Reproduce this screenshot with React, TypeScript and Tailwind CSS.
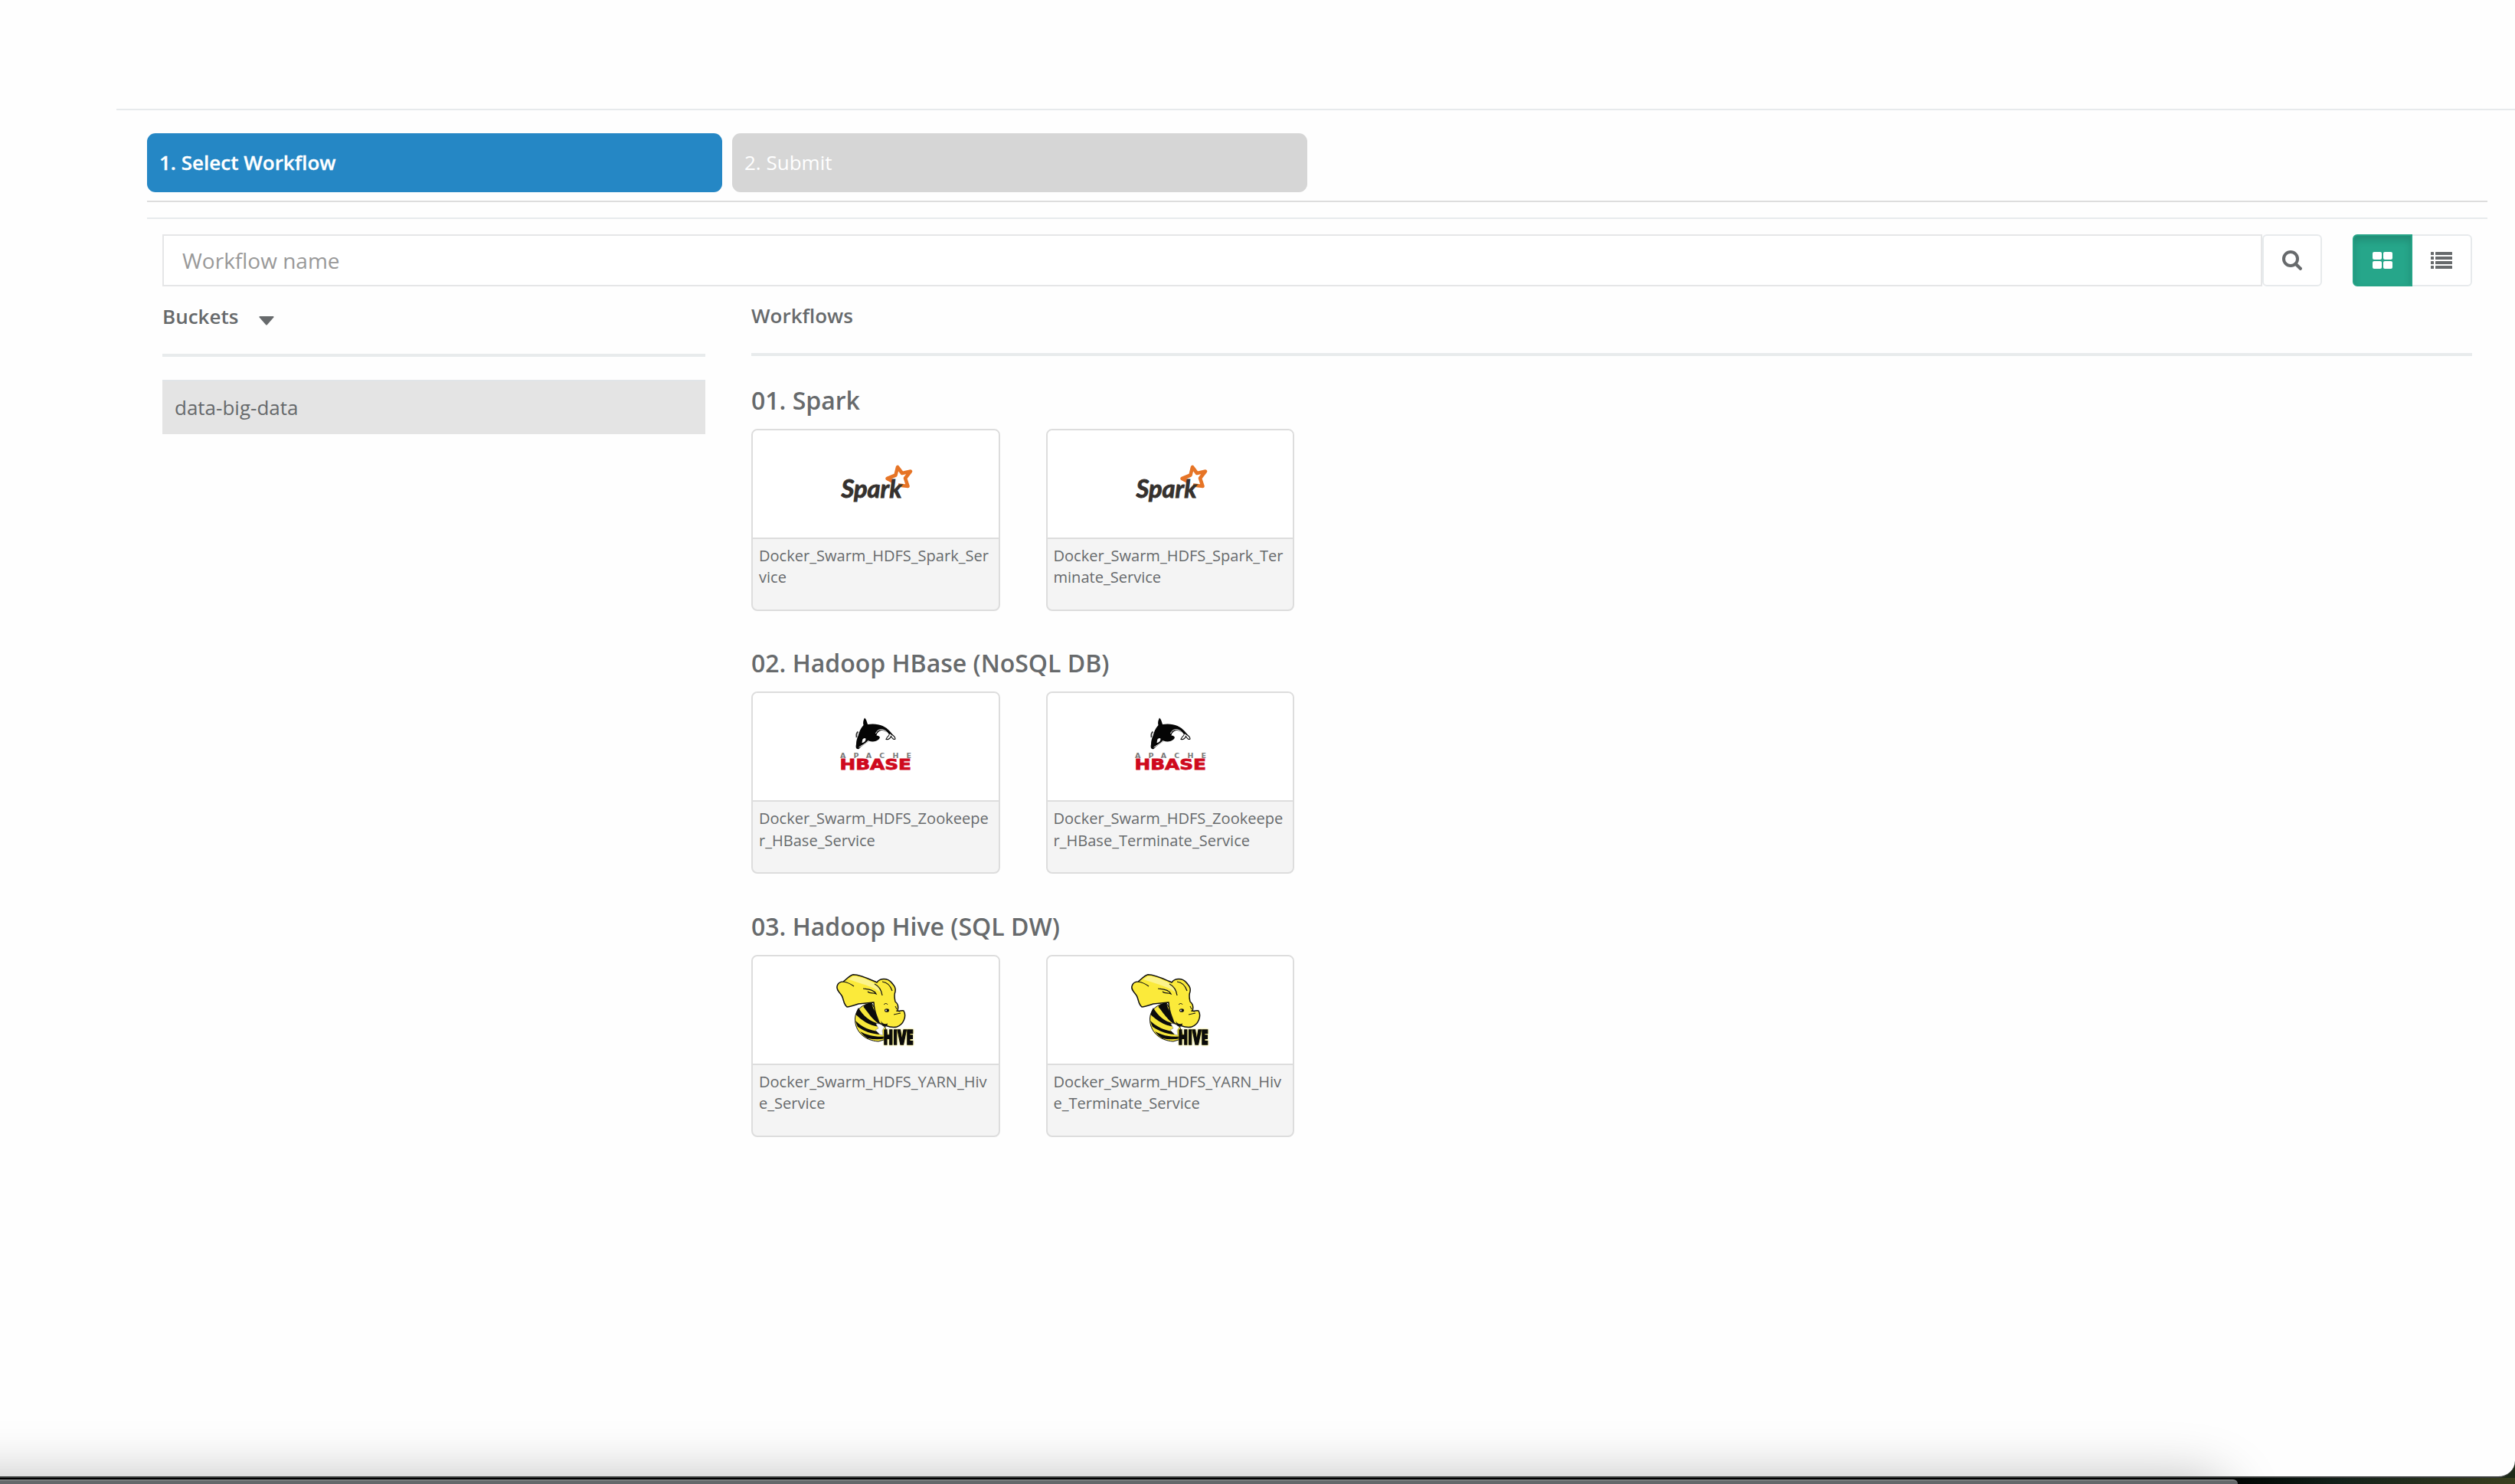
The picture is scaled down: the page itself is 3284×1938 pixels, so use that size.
import React from "react";

function SparkLogo() {
  return (
    <svg width="92" height="52" viewBox="0 0 92 52" className="block overflow-visible">
      <path
        d="M75 27.500 L87.500 29 L84 18.500 L91 9.500 L80 12 L74 4 L71.500 14.500 L60.500 19 L69 23.500"
        fill="none"
        stroke="#e67426"
        strokeWidth="4.600"
        strokeLinejoin="round"
      />
      <text
        x="0.500"
        y="44"
        textLength="79"
        lengthAdjust="spacingAndGlyphs"
        fill="#35312e"
        stroke="#35312e"
        strokeWidth="0.900"
        className="font-['Lato',sans-serif] text-[32px] font-bold italic"
      >
        Spark
      </text>
    </svg>
  );
}

function HBaseLogo() {
  return (
    <svg width="94" height="70" viewBox="0 0 94 70" className="block overflow-visible">
      <path
        d="M33 0.500 C35.500 2.500 36 6 37 9 C50 7 60 11 66 18 C69 21.500 71.500 24 73 28 C69 26 67 23 64 21 C57 14 50 17 48.500 23.500 C53 24 54 26 51.500 28.500 C48 32 42 32 38.500 30.500 C35 34 29 36.500 25.500 41 C22 42 21 39 22 35 C22 31 23 27 24.500 24 C26 18 28 14 31.500 10 C30.500 7 31.500 3 33 0.500Z"
        fill="#050505"
      />
      <path d="M47.500 21 C50 13.500 59 14.500 63.500 20.500" fill="none" stroke="#fff" strokeWidth="1" />
      <path d="M30 30 C30 27.500 34 26 34.500 28 C34.500 31 31.500 33 29.500 33Z" fill="#fff" />
      <path d="M25.500 39 C30 36 34 34.500 38 30" fill="none" stroke="#fff" strokeWidth="0.900" />
      <path d="M65 22 C65.500 24 62 25 61 28.500 C65 29 67 26 67.500 24.500 C69 27 71 29.500 73 28 C73 25 70 23 67 21.500" fill="#fff" stroke="#111" strokeWidth="1.100" />
      <path d="M24.500 18.500 C22.500 20 22 23 22.500 26" stroke="#333" strokeWidth="1.800" fill="none" />
      <text x="1" y="52.700" textLength="93" fill="#7b7b7b" className="font-['DejaVu_Sans',sans-serif] text-[9.500px] font-bold">
        APACHE
      </text>
      <text
        x="0.500"
        y="68"
        textLength="93.500"
        lengthAdjust="spacingAndGlyphs"
        fill="#cf0a1d"
        stroke="#cf0a1d"
        strokeWidth="0.800"
        className="font-['DejaVu_Sans',sans-serif] text-[19.500px] font-bold"
      >
        HBASE
      </text>
    </svg>
  );
}

function HiveLogo() {
  return (
    <svg width="104" height="94" viewBox="0 0 104 94" className="block overflow-visible">
      <path d="M47 38 C36 39 26 46 25.500 58 C25 75 38 87 56 88 L70 84 L62 62Z" fill="#f7e73a" stroke="#111" strokeWidth="1" />
      <g fill="#0b0b0b">
        <path d="M47 37 C40 39 37 41 36.500 43 C42 49 47 59 58 66 L54 52 C50 48 48 42 47 37Z" />
        <path d="M30 44 C28 47 27 50 26.500 53 C34 60 43 67 57 69 L57 65 C45 62 36 55 30 44Z" />
        <path d="M26 61 C27 64 28 67 29 69 C38 75 46 78 58 79 L57 75 C45 74 34 69 26 61Z" />
        <path d="M32 75 C35 79 38 82 42 84 C52 86 62 86 74 82 L70 81 C55 83 43 81 32 75Z" />
      </g>
      <path d="M53 65 C58 64 62 68 64 69 L61 74 L62 80 L58 79 L52 73 L56 71Z" fill="#fff" stroke="#999" strokeWidth="0.700" />
      <path
        d="M54 11 C58 5 68 5 73 11 C76 15 79 17 78 23 C76 28 77 31 78 36 C83 40 82 45 81 48 C84 49 86 47 89 48 C93 55 89 66 80 69 C73 71 68 68 62 66 C58 65 56 64 56 61 C53 53 50 47 50 37 L30 39 C24 41 18 43 15 43 C10 39 11 33 8 28 C4 23 1 20 2 16 C3 12 6 10 10 10 C14 7 18 2 23 0.800 C33 1 45 7 54 11Z"
        fill="#fbea3a"
        stroke="#111"
        strokeWidth="1.500"
        strokeLinejoin="round"
      />
      <path d="M23 3 C34 3 45 9 52 13 C56 16 58 20 59 24 C50 17 38 14 26 10 L17 7Z" fill="#fbf38b" />
      <path
        d="M10 10 C16 11 20 13 24 16 M36 19 C42 20 50 20 53 26 C49 24 45 26 42 23 M51 13 C57 16 60 21 61 28 M61 10 C69 11 72 16 74 22"
        fill="none"
        stroke="#111"
        strokeWidth="1.200"
      />
      <path d="M63 40 C65 38 67 38 68 40 M84 49 L79 48 M85 51 L76 53 M80 46 L78 42" fill="none" stroke="#111" strokeWidth="1" />
      <ellipse cx="67" cy="47.500" rx="3" ry="2.300" fill="#111" />
      <circle cx="66" cy="47.500" r="0.900" fill="#fff" />
      <path d="M59 61 C61 65 65 66 68 64.500 C68 69 64 70 61 67Z" fill="#111" />
      <text
        x="62.500"
        y="91.500"
        textLength="39"
        lengthAdjust="spacingAndGlyphs"
        fill="#0a0a0a"
        stroke="#0a0a0a"
        strokeWidth="1.600"
        className="font-['Open_Sans',sans-serif] text-[26.500px] font-extrabold [filter:drop-shadow(0_0_0.8px_#d8ca20)]"
      >
        HIVE
      </text>
    </svg>
  );
}

function SearchIcon() {
  return (
    <svg width="26" height="26" viewBox="0 0 26 26" className="block">
      <circle cx="11" cy="11" r="9" fill="none" stroke="#676a6c" strokeWidth="4" />
      <path d="M18 18 L23.800 23.800" stroke="#676a6c" strokeWidth="4.200" strokeLinecap="round" />
    </svg>
  );
}

function GridIcon() {
  return (
    <svg width="26" height="22" viewBox="0 0 26 22" fill="#fff" className="block">
      <rect width="12" height="10" rx="2" />
      <rect x="14" width="12" height="10" rx="2" />
      <rect y="12" width="12" height="10" rx="2" />
      <rect x="14" y="12" width="12" height="10" rx="2" />
    </svg>
  );
}

function ListIcon() {
  return (
    <svg width="28" height="22" viewBox="0 0 28 22" fill="#676a6c" className="block">
      {[0, 6, 12, 18].map((y) => (
        <g key={y}>
          <rect y={y} width="4" height="4" rx="0.500" />
          <rect x="6" y={y} width="22" height="4" rx="0.500" />
        </g>
      ))}
    </svg>
  );
}

const groups = [
  {
    title: "01. Spark",
    Logo: SparkLogo,
    logoBox: "pl-[2px]",
    items: [
      ["Docker_Swarm_HDFS_Spark_Ser", "vice"],
      ["Docker_Swarm_HDFS_Spark_Ter", "minate_Service"],
    ],
  },
  {
    title: "02. Hadoop HBase (NoSQL DB)",
    Logo: HBaseLogo,
    logoBox: "pb-[7px]",
    items: [
      ["Docker_Swarm_HDFS_Zookeepe", "r_HBase_Service"],
      ["Docker_Swarm_HDFS_Zookeepe", "r_HBase_Terminate_Service"],
    ],
  },
  {
    title: "03. Hadoop Hive (SQL DW)",
    Logo: HiveLogo,
    logoBox: "pt-px",
    items: [
      ["Docker_Swarm_HDFS_YARN_Hiv", "e_Service"],
      ["Docker_Swarm_HDFS_YARN_Hiv", "e_Terminate_Service"],
    ],
  },
];

function Card({ lines, logoBox, children }: { lines: string[]; logoBox: string; children: React.ReactNode }) {
  return (
    <div className="flex h-[238px] w-[324.500px] flex-col overflow-hidden rounded-[8px] border-2 border-[#dddddd] bg-[#f4f4f4]">
      <div className={`flex h-[142px] items-center justify-center border-b-2 border-[#dddddd] bg-white ${logoBox}`}>
        {children}
      </div>
      <div className="pt-[8px] pl-[8px] text-[20.060px] leading-[28.300px] whitespace-nowrap">
        {lines.map((l) => (
          <div key={l}>{l}</div>
        ))}
      </div>
    </div>
  );
}

export default function App() {
  return (
    <div className="flex h-[1938px] w-[3284px] flex-col overflow-hidden bg-[#1d2a18] font-['Open_Sans',sans-serif] text-[26px] text-[#676a6c]">
      <div className="relative h-[1930px] shrink-0 overflow-hidden rounded-br-[22px] border-b-2 border-[#3a3d3c] bg-[#fefefe] pt-[142px] pl-[152px]">
        <main className="border-t-2 border-[#e7eaec] pt-[30px] pr-[36px] pl-[40px]">
          <nav className="flex gap-[13px]">
            <div className="flex h-[77px] w-[751px] items-center rounded-[11px] bg-[#2587c5] pl-4 font-semibold text-white [-webkit-text-stroke:0.3px_#ffffff]">
              1. Select Workflow
            </div>
            <div className="flex h-[77px] w-[751px] items-center rounded-[11px] bg-[#d6d6d6] pl-4 text-white">
              2. Submit
            </div>
          </nav>
          <div className="mt-[11px] h-[2px] bg-[#dddddd]" />
          <div className="mt-[20px] border-t-2 border-[#e7eaec] px-[20px] pt-[20px]">
            <div className="flex h-[68px]">
              <div className="flex flex-1 items-center border-2 border-[#e5e6e7] bg-white pl-[24px] text-[28px] text-[#999999]">
                Workflow name
              </div>
              <button className="flex w-[78px] items-center justify-center rounded-[6px] border-2 border-[#e7eaec] bg-white">
                <SearchIcon />
              </button>
              <button className="ml-[40px] flex w-[78px] items-center justify-center rounded-l-[6px] border-2 border-[#26a487] bg-[#26a68a] shadow-[inset_0_6px_10px_rgba(0,0,0,0.15)]">
                <GridIcon />
              </button>
              <button className="flex w-[78px] items-center justify-center rounded-r-[6px] border-2 border-l-0 border-[#e7eaec] bg-white">
                <ListIcon />
              </button>
            </div>
            <div className="flex gap-[60px]">
              <section className="w-[709px] shrink-0">
                <div className="flex h-[92px] items-start border-b-4 border-[#e8ebec] pt-[21px] leading-[37px] font-semibold">
                  Buckets
                  <svg width="20" height="12" viewBox="0 0 20 12" className="mt-[18px] ml-[27px]">
                    <path d="M1 0 H19 Q20 0.500 19.300 1.500 L11 11 Q10 12 9 11 L0.700 1.500 Q0 0.500 1 0Z" fill="#676a6c" />
                  </svg>
                </div>
                <div className="mt-[30px] h-[71px] border-t-2 border-[#e1e5e8] bg-[#e4e4e4] pt-[16px] pl-4 leading-[37px]">
                  data-big-data
                </div>
              </section>
              <section className="flex-1">
                <div className="h-[91px] border-b-4 border-[#e8ebec] pt-[20px] leading-[37px] font-semibold">
                  Workflows
                </div>
                {groups.map(({ title, Logo, logoBox, items }, i) => (
                  <div key={title} className={i === 0 ? "pt-[35px]" : "pt-[45.400px]"}>
                    <h3 className="h-[60px] text-[32px] leading-[46px] font-semibold">{title}</h3>
                    <div className="flex gap-[60px]">
                      {items.map((lines) => (
                        <Card key={lines.join("")} lines={lines} logoBox={logoBox}>
                          <Logo />
                        </Card>
                      ))}
                    </div>
                  </div>
                ))}
              </section>
            </div>
          </div>
        </main>
        <div className="absolute top-[1932px] -left-[200px] h-[80px] w-[3110px] rounded-[40px] shadow-[0_0_72px_rgba(0,0,0,0.28)]" />
      </div>
      <div className="flex flex-1 bg-linear-to-r from-black from-85% via-[#14211a] via-93% to-[#3a3f1e] pt-[2px]">
        <div className="h-[6px] w-[2922px] rounded-tr-[14px] border-t-2 border-[#7b7f7f] bg-[#64686a]" />
      </div>
    </div>
  );
}
